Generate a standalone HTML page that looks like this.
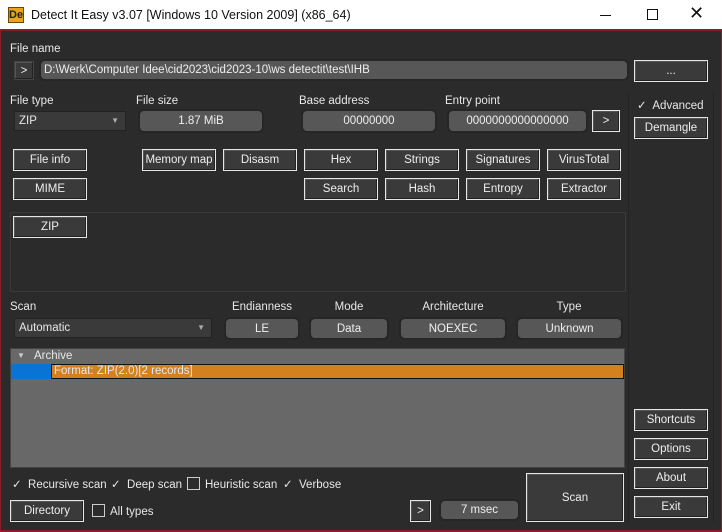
<!DOCTYPE html>
<html><head><meta charset="utf-8"><style>
*{box-sizing:border-box;margin:0;padding:0}
body{width:722px;height:532px;background:#2b2b2b;font-family:"Liberation Sans",sans-serif;font-size:11.5px;color:#e8e8e8;position:relative;overflow:hidden}
.a{position:absolute}
.t{position:absolute;white-space:nowrap}
.b{position:absolute;background:#3a3a3a;border:1px solid #e6e6e6;box-shadow:inset -1px -1px 0 #222,inset 1px 1px 0 #555;display:flex;align-items:center;justify-content:center;color:#eee;white-space:nowrap}
.f{position:absolute;background:#575757;border-radius:4px;display:flex;align-items:center;justify-content:center;color:#eee;box-shadow:0 0 0 2px #262626;white-space:nowrap}
.lab{position:absolute;white-space:nowrap;transform:translateX(-50%)}
.ck{position:absolute;white-space:nowrap}
.box{display:inline-block;width:13px;height:13px;border:1px solid #ccc;vertical-align:-2px;margin-right:5px}
</style></head><body>
<div class="a" style="left:0;top:0;width:722px;height:31px;background:#fff;border-bottom:2px solid #8b1c2a"></div>
<div class="a" style="left:8px;top:7px;width:16px;height:16px;background:#e8a41c;border:1px solid #6b4a00;font:bold 11px 'Liberation Sans';color:#222;line-height:14px;text-align:center">De</div>
<div class="t" style="left:31px;top:8px;color:#111;font-size:12.5px">Detect It Easy v3.07 [Windows 10 Version 2009] (x86_64)</div>
<div class="a" style="left:600px;top:15px;width:11px;height:1px;background:#111"></div>
<div class="a" style="left:647px;top:9px;width:11px;height:11px;border:1px solid #111"></div>
<div class="t" style="left:689px;top:3px;color:#111;font-size:18px">✕</div>
<div class="a" style="left:0;top:31px;width:1px;height:501px;background:#8b1c2a"></div>
<div class="a" style="left:721px;top:31px;width:1px;height:501px;background:#8b1c2a"></div>
<div class="a" style="left:0;top:530px;width:722px;height:2px;background:#8b1c2a"></div>
<div class="a" style="left:628px;top:92px;width:1px;height:430px;background:#232323"></div>
<div class="a" style="left:713px;top:92px;width:1px;height:430px;background:#232323"></div>

<div class="t" style="left:10px;top:43px">File name</div>
<div class="b" style="left:14px;top:61px;width:20px;height:19px;border-color:#444">&gt;</div>
<div class="f" style="left:41px;top:61px;width:586px;height:18px;justify-content:flex-start;padding-left:3px">D:\Werk\Computer Idee\cid2023\cid2023-10\ws detectit\test\IHB</div>
<div class="b" style="left:634px;top:60px;width:74px;height:22px">...</div>

<div class="t" style="left:10px;top:95px">File type</div>
<div class="t" style="left:136px;top:95px">File size</div>
<div class="t" style="left:299px;top:95px">Base address</div>
<div class="t" style="left:445px;top:95px">Entry point</div>
<div class="a" style="left:14px;top:111px;width:112px;height:20px;background:#3a3a3a;border:1px solid #222;padding:3px 4px">ZIP<span style="position:absolute;right:6px;top:4px;font-size:8px;color:#aaa">▼</span></div>
<div class="f" style="left:140px;top:111px;width:122px;height:20px">1.87 MiB</div>
<div class="f" style="left:303px;top:111px;width:132px;height:20px">00000000</div>
<div class="f" style="left:449px;top:111px;width:137px;height:20px">0000000000000000</div>
<div class="b" style="left:592px;top:110px;width:28px;height:22px">&gt;</div>
<div class="ck" style="left:637px;top:98px">✓&nbsp; Advanced</div>
<div class="b" style="left:634px;top:117px;width:74px;height:22px">Demangle</div>

<div class="b" style="left:13px;top:149px;width:74px;height:22px">File info</div>
<div class="b" style="left:142px;top:149px;width:74px;height:22px">Memory map</div>
<div class="b" style="left:223px;top:149px;width:74px;height:22px">Disasm</div>
<div class="b" style="left:304px;top:149px;width:74px;height:22px">Hex</div>
<div class="b" style="left:385px;top:149px;width:74px;height:22px">Strings</div>
<div class="b" style="left:466px;top:149px;width:74px;height:22px">Signatures</div>
<div class="b" style="left:547px;top:149px;width:74px;height:22px">VirusTotal</div>
<div class="b" style="left:13px;top:178px;width:74px;height:22px">MIME</div>
<div class="b" style="left:304px;top:178px;width:74px;height:22px">Search</div>
<div class="b" style="left:385px;top:178px;width:74px;height:22px">Hash</div>
<div class="b" style="left:466px;top:178px;width:74px;height:22px">Entropy</div>
<div class="b" style="left:547px;top:178px;width:74px;height:22px">Extractor</div>

<div class="a" style="left:10px;top:212px;width:616px;height:80px;border:1px solid #3a3a3a"></div>
<div class="b" style="left:13px;top:216px;width:74px;height:22px">ZIP</div>

<div class="t" style="left:10px;top:301px">Scan</div>
<div class="lab" style="left:262px;top:301px">Endianness</div>
<div class="lab" style="left:349px;top:301px">Mode</div>
<div class="lab" style="left:453px;top:301px">Architecture</div>
<div class="lab" style="left:569px;top:301px">Type</div>
<div class="a" style="left:14px;top:318px;width:198px;height:20px;background:#3a3a3a;border:1px solid #222;padding:3px 4px">Automatic<span style="position:absolute;right:6px;top:4px;font-size:8px;color:#aaa">▼</span></div>
<div class="f" style="left:226px;top:319px;width:72px;height:19px">LE</div>
<div class="f" style="left:311px;top:319px;width:76px;height:19px">Data</div>
<div class="f" style="left:401px;top:319px;width:104px;height:19px">NOEXEC</div>
<div class="f" style="left:518px;top:319px;width:103px;height:19px">Unknown</div>

<div class="a" style="left:10px;top:348px;width:615px;height:120px;background:#686868;border:1px solid #444"></div>
<div class="t" style="left:17px;top:351px;font-size:8px;color:#ccc">▼</div>
<div class="t" style="left:34px;top:350px">Archive</div>
<div class="a" style="left:11px;top:364px;width:41px;height:15px;background:#0a74d6"></div>
<div class="a" style="left:51px;top:364px;width:573px;height:15px;background:#d4801f;border:1px solid #111;padding-left:2px;line-height:13px">Format: ZIP(2.0)[2 records]</div>

<div class="b" style="left:634px;top:409px;width:74px;height:22px">Shortcuts</div>
<div class="b" style="left:634px;top:438px;width:74px;height:22px">Options</div>
<div class="b" style="left:634px;top:467px;width:74px;height:22px">About</div>
<div class="b" style="left:634px;top:496px;width:74px;height:22px">Exit</div>

<div class="ck" style="left:12px;top:477px">✓&nbsp; Recursive scan</div>
<div class="ck" style="left:111px;top:477px">✓&nbsp; Deep scan</div>
<div class="ck" style="left:187px;top:477px"><span class="box"></span>Heuristic scan</div>
<div class="ck" style="left:283px;top:477px">✓&nbsp; Verbose</div>
<div class="b" style="left:10px;top:500px;width:74px;height:22px">Directory</div>
<div class="ck" style="left:92px;top:504px"><span class="box"></span>All types</div>
<div class="b" style="left:410px;top:500px;width:21px;height:22px">&gt;</div>
<div class="f" style="left:441px;top:501px;width:77px;height:18px">7 msec</div>
<div class="b" style="left:526px;top:473px;width:98px;height:49px">Scan</div>
</body></html>
